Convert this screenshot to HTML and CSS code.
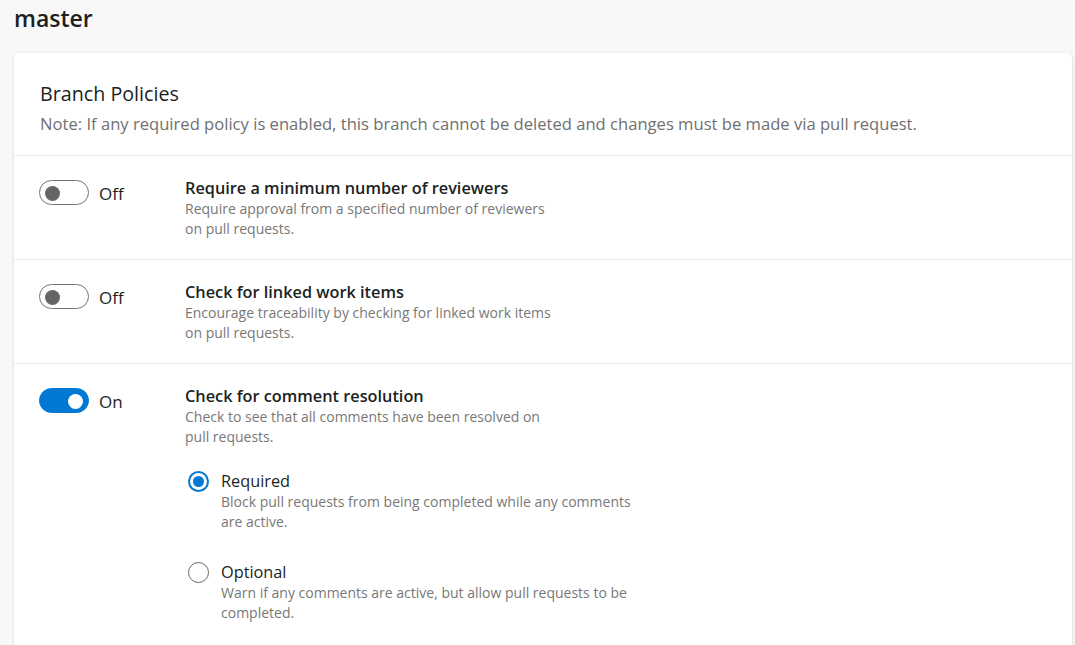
FILE: index.html
```html
<!DOCTYPE html>
<html lang="en">
<head>
<meta charset="utf-8">
<title>master - Branch Policies</title>
<link rel="stylesheet" href="styles.css">
</head>
<body>
<div class="page">
  <h1 class="page-title">master</h1>
  <section class="card">
    <header class="card-header">
      <h2 class="card-title">Branch Policies</h2>
      <p class="card-note">Note: If any required policy is enabled, this branch cannot be deleted and changes must be made via pull request.</p>
    </header>

    <div class="policy">
      <div class="toggle-col">
        <span class="toggle"><span class="knob"></span></span>
        <span class="toggle-label">Off</span>
      </div>
      <div class="policy-body">
        <div class="policy-title">Require a minimum number of reviewers</div>
        <div class="policy-desc">Require approval from a specified number of reviewers<br>on pull requests.</div>
      </div>
    </div>

    <div class="policy">
      <div class="toggle-col">
        <span class="toggle"><span class="knob"></span></span>
        <span class="toggle-label">Off</span>
      </div>
      <div class="policy-body">
        <div class="policy-title">Check for linked work items</div>
        <div class="policy-desc">Encourage traceability by checking for linked work items<br>on pull requests.</div>
      </div>
    </div>

    <div class="policy">
      <div class="toggle-col">
        <span class="toggle on"><span class="knob"></span></span>
        <span class="toggle-label">On</span>
      </div>
      <div class="policy-body">
        <div class="policy-title">Check for comment resolution</div>
        <div class="policy-desc">Check to see that all comments have been resolved on<br>pull requests.</div>
        <div class="options">
          <div class="option">
            <span class="radio checked"></span>
            <div class="option-text">
              <div class="option-label">Required</div>
              <div class="option-desc">Block pull requests from being completed while any comments<br>are active.</div>
            </div>
          </div>
          <div class="option">
            <span class="radio"></span>
            <div class="option-text">
              <div class="option-label">Optional</div>
              <div class="option-desc">Warn if any comments are active, but allow pull requests to be<br>completed.</div>
            </div>
          </div>
        </div>
      </div>
    </div>
  </section>
</div>
</body>
</html>
```

FILE: styles.css
```css
* { box-sizing: border-box; }
html, body {
  margin: 0;
  padding: 0;
  background: #f8f8f8;
  font-family: "Open Sans", "Noto Sans", sans-serif;
  color: #201f1e;
}
.page {
  padding: 2px 3px 0 14px;
}
.page-title {
  margin: 0;
  font-size: 23px;
  font-weight: 600;
  line-height: 32px;
  color: #201f1e;
}
.card {
  margin-top: 19px;
  background: #fff;
  border-radius: 4px;
  box-shadow: 0 1.6px 3.6px rgba(0,0,0,0.13), 0 0.3px 0.9px rgba(0,0,0,0.11);
}
.card-header {
  padding: 27px 25px 19px 26px;
}
.card-title {
  margin: 0;
  font-size: 19.7px;
  font-weight: 400;
  line-height: 28px;
  color: #201f1e;
}
.card-note {
  margin: 4px 0 0;
  font-size: 16.6px;
  line-height: 24px;
  color: #707070;
}
.policy {
  display: flex;
  border-top: 1px solid #eaeaea;
  padding: 21px 25px 20px 25px;
}
.policy:last-child {
  padding-bottom: 40px;
}
.toggle-col {
  width: 146px;
  flex: none;
  display: flex;
  align-items: center;
  gap: 10px;
  margin-top: 3px;
  height: 25px;
}
.toggle {
  position: relative;
  width: 50px;
  height: 25px;
  border: 1.5px solid #767676;
  border-radius: 13px;
  background: #fff;
  flex: none;
}
.toggle .knob {
  position: absolute;
  top: 4.5px;
  left: 5px;
  width: 15px;
  height: 15px;
  border-radius: 50%;
  background: #666;
}
.toggle.on {
  background: #0078d4;
  border-color: #0078d4;
}
.toggle.on .knob {
  left: auto;
  right: 5px;
  background: #fff;
}
.toggle-label {
  font-size: 17px;
  line-height: 24px;
  padding-top: 2px;
  color: #201f1e;
}
.policy-body {
  flex: 1;
}
.policy-title {
  font-size: 16.3px;
  font-weight: 600;
  line-height: 22px;
  color: #201f1e;
}
.policy-desc {
  font-size: 14px;
  line-height: 20px;
  color: #787878;
}
.options {
  padding-top: 23px;
  padding-left: 3px;
  display: flex;
  flex-direction: column;
  gap: 29px;
}
.option {
  display: flex;
  gap: 12px;
}
.radio {
  flex: none;
  width: 21px;
  height: 21px;
  margin-top: 1px;
  border-radius: 50%;
  border: 1.5px solid #666;
  background: #fff;
  position: relative;
}
.radio.checked {
  border: 2.5px solid #0078d4;
}
.radio.checked::after {
  content: "";
  position: absolute;
  left: 2.5px;
  top: 2.5px;
  width: 11px;
  height: 11px;
  border-radius: 50%;
  background: #0078d4;
}
.option-label {
  font-size: 16.3px;
  line-height: 22px;
  color: #201f1e;
}
.option-desc {
  font-size: 14px;
  line-height: 20px;
  color: #787878;
}
```
